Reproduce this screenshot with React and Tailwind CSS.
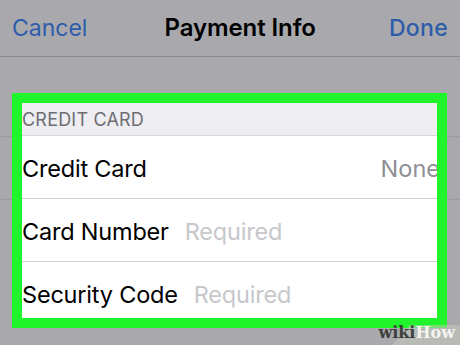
export default function App() {
  const rows = [
    { label: 'Credit Card', value: 'None', right: true },
    { label: 'Card Number', value: 'Required' },
    { label: 'Security Code', value: 'Required' },
  ]

  return (
    <div className="relative w-[460px] h-[345px] overflow-hidden bg-[#a9a9ad]" style={{ fontFamily: 'Inter, "Liberation Sans", sans-serif' }}>
      {/* nav bar */}
      <div className="h-[57px] flex items-center justify-between px-3 border-b border-[#8c8c90]">
        <span className="text-[23px] text-[#2d5cab] pt-[1px]">Cancel</span>
        <span className="text-[24px] font-semibold text-black tracking-[-0.1px] ml-[4px]">Payment Info</span>
        <span className="text-[23px] font-medium text-[#2d5cab] tracking-[0.3px]">Done</span>
      </div>

      <div className="h-[36px]"></div>

      {/* highlighted section */}
      <div className="relative">
        <div className="absolute left-0 right-0 top-[43px] border-t border-[#9d9da1]"></div>
        <div className="absolute left-0 right-0 top-[106px] border-t border-[#9d9da1]"></div>
        <div className="relative ml-3 w-[435px] border-[10px] border-[#20f52b] bg-white">
          <div className="h-[33px] bg-[#eeeef2] border-b border-[#d6d6da] flex items-center">
            <span className="text-[18px] text-[#6d6d72] tracking-[0.2px]">CREDIT CARD</span>
          </div>
          <div className="overflow-hidden">
            {rows.map((r, i) => (
              <div
                key={r.label}
                className={
                  i < 2
                    ? 'h-[63px] flex items-center pt-[4px] border-b border-[#d0d0d4]'
                    : 'h-[56px] flex items-end pb-[6px]'
                }
              >
                <span className="text-[23.5px] text-black tracking-[-0.2px] whitespace-nowrap">{r.label}</span>
                {r.right ? (
                  <span className="ml-auto mr-[-3px] text-[23.5px] text-[#8e8e93] whitespace-nowrap">{r.value}</span>
                ) : (
                  <span className="ml-[16px] text-[23.5px] text-[#c7c7cc] tracking-[-0.2px] whitespace-nowrap">{r.value}</span>
                )}
              </div>
            ))}
          </div>
        </div>
      </div>

      {/* wikiHow watermark */}
      <div className="absolute right-0 bottom-0 w-[90px] h-[26px]">
        <svg className="absolute inset-0" width="90" height="26" viewBox="0 0 90 26">
          <polygon points="22,26 40,6 90,6 90,26" fill="#c4c8bc" opacity="0.55" />
        </svg>
        <div className="absolute right-[5px] bottom-[4px] text-[16px] font-bold leading-none" style={{ fontFamily: '"DejaVu Serif", "Liberation Serif", serif' }}>
          <span className="text-[#3d3f3a]">wiki</span>
          <span className="text-[#f4f4f0]">How</span>
        </div>
      </div>
    </div>
  )
}
